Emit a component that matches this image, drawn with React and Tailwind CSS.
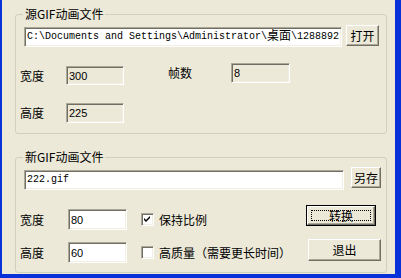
import React from 'react';

const cjk = "font-['SimSun','Noto_Sans_CJK_SC',sans-serif] text-[12px] leading-[12px] text-black";
const mono = "font-['Liberation_Mono','Noto_Sans_CJK_SC',monospace] text-[10px] leading-[14px] text-black";
const sans = "font-['Liberation_Sans','Noto_Sans_CJK_SC',sans-serif] text-[11px] leading-[14px] text-black";

const sunken =
	'border border-t-[#aca899] border-l-[#aca899] border-b-white border-r-white shadow-[inset_1px_1px_0_#716f64,inset_-1px_-1px_0_#f1efe2]';
const raised =
	'border border-t-white border-l-white border-b-[#716f64] border-r-[#716f64] shadow-[inset_-1px_-1px_0_#aca899] bg-[#ece9d8]';

function Field({ children, className, disabled, font = sans }) {
	return (
		<div
			className={
				'flex items-center pl-[2px] overflow-hidden whitespace-nowrap ' +
				sunken +
				' ' +
				(disabled ? 'bg-[#ece9d8] ' : 'bg-white ') +
				font +
				' ' +
				className
			}
		>
			{children}
		</div>
	);
}

function Button({ children, className, isDefault }) {
	if (isDefault) {
		return (
			<div className={'border border-black p-0 ' + className}>
				<div className={'w-full h-full flex items-center justify-center p-[3px] ' + raised}>
					<div className={'w-full h-full flex items-center justify-center border border-dotted border-black ' + cjk}>
						{children}
					</div>
				</div>
			</div>
		);
	}
	return (
		<div className={'flex items-center justify-center ' + raised + ' ' + cjk + ' ' + className}>
			{children}
		</div>
	);
}

function Check({ checked }) {
	return (
		<div className={'w-[13px] h-[13px] bg-white flex items-center justify-center ' + sunken}>
			{checked && (
				<svg width="7" height="7" viewBox="0 0 7 7">
					<path d="M0 2 L2 4 L6 0 L6 2 L2 6 L0 4 Z" fill="#000" />
				</svg>
			)}
		</div>
	);
}

function GroupBox({ title, className, children }) {
	return (
		<div className={'relative border border-[#d0d0bf] rounded-[3px] ' + className}>
			<div className={'absolute left-[7px] top-[-7px] px-[2px] bg-[#ece9d8] ' + cjk}>{title}</div>
			{children}
		</div>
	);
}

export default function App() {
	return (
		<div className="w-[401px] h-[278px] box-border bg-[#ece9d8] border-l-2 border-r-[6px] border-b-4 border-[#0831d9] flex flex-col pl-[13px] pr-[8px]">
			<GroupBox title="源GIF动画文件" className="mt-[14px] h-[120px]">
				<div className="flex items-start mt-[10px] pl-[8px]">
					<Field font={mono} className="w-[318px] h-[20px] mt-[2px]">
						C:\Documents and Settings\Administrator\<span className="text-[12px]">桌面</span>\1288892
					</Field>
					<Button className="ml-[4px] w-[33px] h-[21px]">打开</Button>
				</div>
				<div className="flex items-start mt-[16px]">
					<div className="flex items-center mt-[3px]">
						<div className={'w-[50px] pl-[4px] ' + cjk}>宽度</div>
						<Field disabled className="w-[58px] h-[19px]">300</Field>
					</div>
					<div className="flex items-center ml-[44px]">
						<div className={'w-[63px] ' + cjk}>帧数</div>
						<Field disabled className="w-[59px] h-[20px]">8</Field>
					</div>
				</div>
				<div className="flex items-center mt-[18px]">
					<div className={'w-[50px] pl-[4px] ' + cjk}>高度</div>
					<Field disabled className="w-[58px] h-[20px]">225</Field>
				</div>
			</GroupBox>

			<GroupBox title="新GIF动画文件" className="mt-[23px] h-[116px]">
				<div className="flex items-start mt-[9px] pl-[8px]">
					<Field font={mono} className="w-[320px] h-[20px] mt-[3px]">222.gif</Field>
					<Button className="ml-[7px] w-[30px] h-[21px]">另存</Button>
				</div>
				<div className="flex items-start mt-[15px]">
					<div className="flex items-center mt-[4px]">
						<div className={'w-[52px] pl-[4px] ' + cjk}>宽度</div>
						<Field className="w-[59px] h-[21px]">80</Field>
						<div className="ml-[14px]">
							<Check checked />
						</div>
						<div className={'ml-[5px] ' + cjk}>保持比例</div>
					</div>
					<Button isDefault className="ml-auto mr-[10px] w-[70px] h-[21px]">转换</Button>
				</div>
				<div className="flex items-start mt-[9px]">
					<div className="flex items-center mt-[3px]">
						<div className={'w-[52px] pl-[4px] ' + cjk}>高度</div>
						<Field className="w-[59px] h-[21px]">60</Field>
						<div className="ml-[14px]">
							<Check />
						</div>
						<div className={'ml-[5px] ' + cjk}>高质量（需要更长时间）</div>
					</div>
					<Button className="ml-auto mr-[5px] w-[73px] h-[22px]">退出</Button>
				</div>
			</GroupBox>
		</div>
	);
}
